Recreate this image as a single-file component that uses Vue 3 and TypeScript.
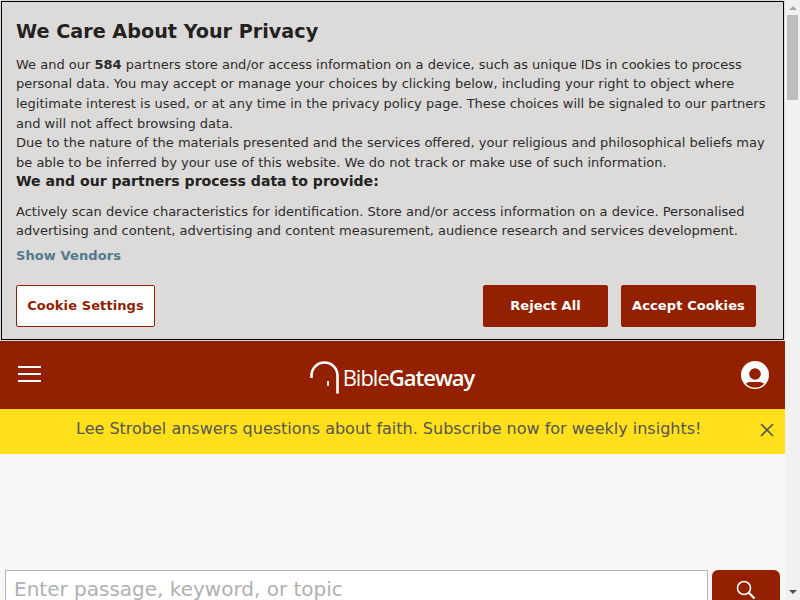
<script setup lang="ts">
const promoText = 'Lee Strobel answers questions about faith. Subscribe now for weekly insights!'
const placeholder = 'Enter passage, keyword, or topic'
</script>

<template>
  <div class="page">
    <main class="content">
      <section class="consent">
        <h2 class="consent-title">We Care About Your Privacy</h2>
        <p class="consent-text">
          We and our <strong>584</strong> partners store and/or access information on a device, such as unique IDs in cookies to process
          personal data. You may accept or manage your choices by clicking below, including your right to object where legitimate interest is used, or at any time in the privacy policy page. These choices will be signaled to our partners and will not affect browsing data.<br />
          Due to the nature of the materials presented and the services offered, your religious and philosophical beliefs may be able to be inferred by your use of this website. We do not track or make use of such information.
        </p>
        <h3 class="consent-sub">We and our partners process data to provide:</h3>
        <p class="consent-purposes">
          Actively scan device characteristics for identification. Store and/or access information on a device. Personalised advertising and content, advertising and content measurement, audience research and services development.
        </p>
        <a class="vendors" href="#">Show Vendors</a>
        <div class="consent-actions">
          <button class="btn btn-outline">Cookie Settings</button>
          <div class="consent-right">
            <button class="btn btn-solid reject">Reject All</button>
            <button class="btn btn-solid accept">Accept Cookies</button>
          </div>
        </div>
      </section>

      <header class="topbar">
        <svg class="menu-icon" width="23" height="18" viewBox="0 0 23 18" fill="none" stroke="#fff" stroke-width="2">
          <path d="M0 2h23M0 9h23M0 16h23" />
        </svg>
        <div class="logo">
          <svg width="29" height="33" viewBox="0 0 29 33" fill="none">
            <path d="M1.500 17V14.500C1.500 7.300 7.300 1.500 14.500 1.500S27.500 7.300 27.500 14.500V32.500" stroke="#fff" stroke-width="2.600" />
            <path d="M18 20v5" stroke="#fff" stroke-width="1.800" />
          </svg>
          <span class="logo-text">Bible<b>Gateway</b></span>
        </div>
        <svg class="user-icon" width="28" height="28" viewBox="0 0 28 28">
          <defs>
            <clipPath id="userClip"><circle cx="14" cy="14" r="12.600" /></clipPath>
          </defs>
          <circle cx="14" cy="14" r="14" fill="#fff" />
          <circle cx="14" cy="13" r="5.800" fill="#932000" />
          <path d="M3 28c0-5 3-7 7-7h8c4 0 7 2 7 7z" fill="#932000" clip-path="url(#userClip)" />
        </svg>
      </header>

      <div class="promo">
        <span class="promo-text">{{ promoText }}</span>
        <svg class="promo-close" width="14" height="14" viewBox="0 0 14 14" stroke="#555" stroke-width="1.600" fill="none">
          <path d="M1 1l12 12M13 1L1 13" />
        </svg>
      </div>

      <div class="search">
        <input class="search-input" type="text" :placeholder="placeholder" />
        <button class="search-btn" aria-label="Search">
          <svg width="20" height="20" viewBox="0 0 20 20" fill="none" stroke="#fff">
            <circle cx="8" cy="8" r="6.500" stroke-width="1.600" />
            <path d="M12.800 12.800l5.700 5.700" stroke-width="2.200" />
          </svg>
        </button>
      </div>
    </main>

    <aside class="scrollbar">
      <span class="arrow arrow-up"></span>
      <span class="thumb"></span>
      <span class="track"></span>
      <span class="arrow arrow-down"></span>
    </aside>
  </div>
</template>

<style>
html,
body {
  margin: 0;
  overflow: hidden;
}
</style>

<style scoped>
.page {
  display: flex;
  width: 800px;
  height: 600px;
  overflow: hidden;
  font-family: "DejaVu Sans", sans-serif;
  background: #f1f1f1;
}

.content {
  width: 785px;
  height: 600px;
  background: #f8f7f5;
  flex: none;
  overflow: hidden;
}

.consent {
  box-sizing: border-box;
  height: 341px;
  padding: 20px 16px 0;
  background: #dcdbda;
  outline: 1px solid #000;
  outline-offset: -2px;
  color: #2b2b2b;
}

.consent-title {
  margin: 0;
  font-size: 19.200px;
  line-height: 24px;
  font-weight: 700;
  color: #222;
}

.consent-text {
  margin: 10.800px 0 0;
  font-size: 13px;
  line-height: 19.600px;
}

.consent-text strong {
  font-weight: 700;
}

.consent-sub {
  margin: 0;
  font-size: 14.080px;
  line-height: 18px;
  font-weight: 700;
  color: #222;
}

.consent-purposes {
  margin: 11.200px 0 0;
  font-size: 13px;
  line-height: 19.600px;
}

.vendors {
  display: block;
  margin-top: 7.200px;
  font-size: 13px;
  line-height: 16px;
  font-weight: 700;
  letter-spacing: 0.1px;
  color: #4f7a8c;
  text-decoration: none;
}

.consent-actions {
  display: flex;
  justify-content: space-between;
  margin: 21px 13px 0 0;
}

.consent-right {
  display: flex;
  gap: 13px;
}

.btn {
  box-sizing: border-box;
  height: 42px;
  border-radius: 2px;
  border: 1px solid #932000;
  font-family: inherit;
  font-size: 13px;
  font-weight: 700;
  letter-spacing: 0.1px;
  padding: 0 0 1px;
}

.btn-outline {
  width: 139px;
  background: #fff;
  color: #932000;
}

.btn-solid {
  background: #932000;
  color: #fff;
}

.reject {
  width: 125px;
}

.accept {
  width: 135px;
}

.topbar {
  display: flex;
  align-items: center;
  justify-content: space-between;
  height: 68px;
  padding: 0 16px 0 18px;
  background: linear-gradient(#8a1e02, #932000 6px);
}

.menu-icon {
  margin-bottom: 2px;
}

.logo {
  display: flex;
  align-items: center;
  gap: 4px;
  color: #fff;
  margin-left: 2px;
  margin-top: 8px;
  margin-bottom: 4px;
}

.logo-text {
  font-family: "Open Sans", sans-serif;
  font-size: 22px;
  font-weight: 400;
  letter-spacing: -1px;
}

.logo-text b {
  font-weight: 600;
}

.promo {
  box-sizing: border-box;
  display: flex;
  align-items: center;
  justify-content: space-between;
  height: 45px;
  padding: 0 11px 4px 76px;
  background: #ffe01b;
  color: #555;
  font-size: 16px;
}

.promo-text {
  margin-bottom: 2px;
}

.search {
  display: flex;
  gap: 4px;
  margin-top: 116px;
  padding: 0 5px;
}

.search-input {
  box-sizing: border-box;
  width: 703px;
  height: 44px;
  padding: 0 8px 6px;
  border: 1px solid #b5b5b5;
  background: #fff;
  font-family: inherit;
  font-size: 20px;
  flex: none;
}

.search-input::placeholder {
  color: #b0b0b0;
  opacity: 1;
}

.search-btn {
  width: 68px;
  height: 44px;
  border: none;
  border-radius: 6px;
  background: #932000;
  padding: 0 0 4px;
  display: flex;
  align-items: center;
  justify-content: center;
  flex: none;
}

.scrollbar {
  width: 15px;
  flex: none;
  display: flex;
  flex-direction: column;
  align-items: center;
  background: #f1f1f1;
}

.arrow {
  flex: none;
  width: 0;
  height: 0;
  border-left: 4px solid transparent;
  border-right: 4px solid transparent;
}

.arrow-up {
  margin-top: 6px;
  border-bottom: 4px solid #a3a3a3;
}

.thumb {
  flex: none;
  width: 11px;
  height: 85px;
  margin-top: 5px;
  background: #bdbdbd;
}

.track {
  flex: 1;
}

.arrow-down {
  margin-bottom: 6px;
  border-top: 4px solid #505050;
}
</style>
